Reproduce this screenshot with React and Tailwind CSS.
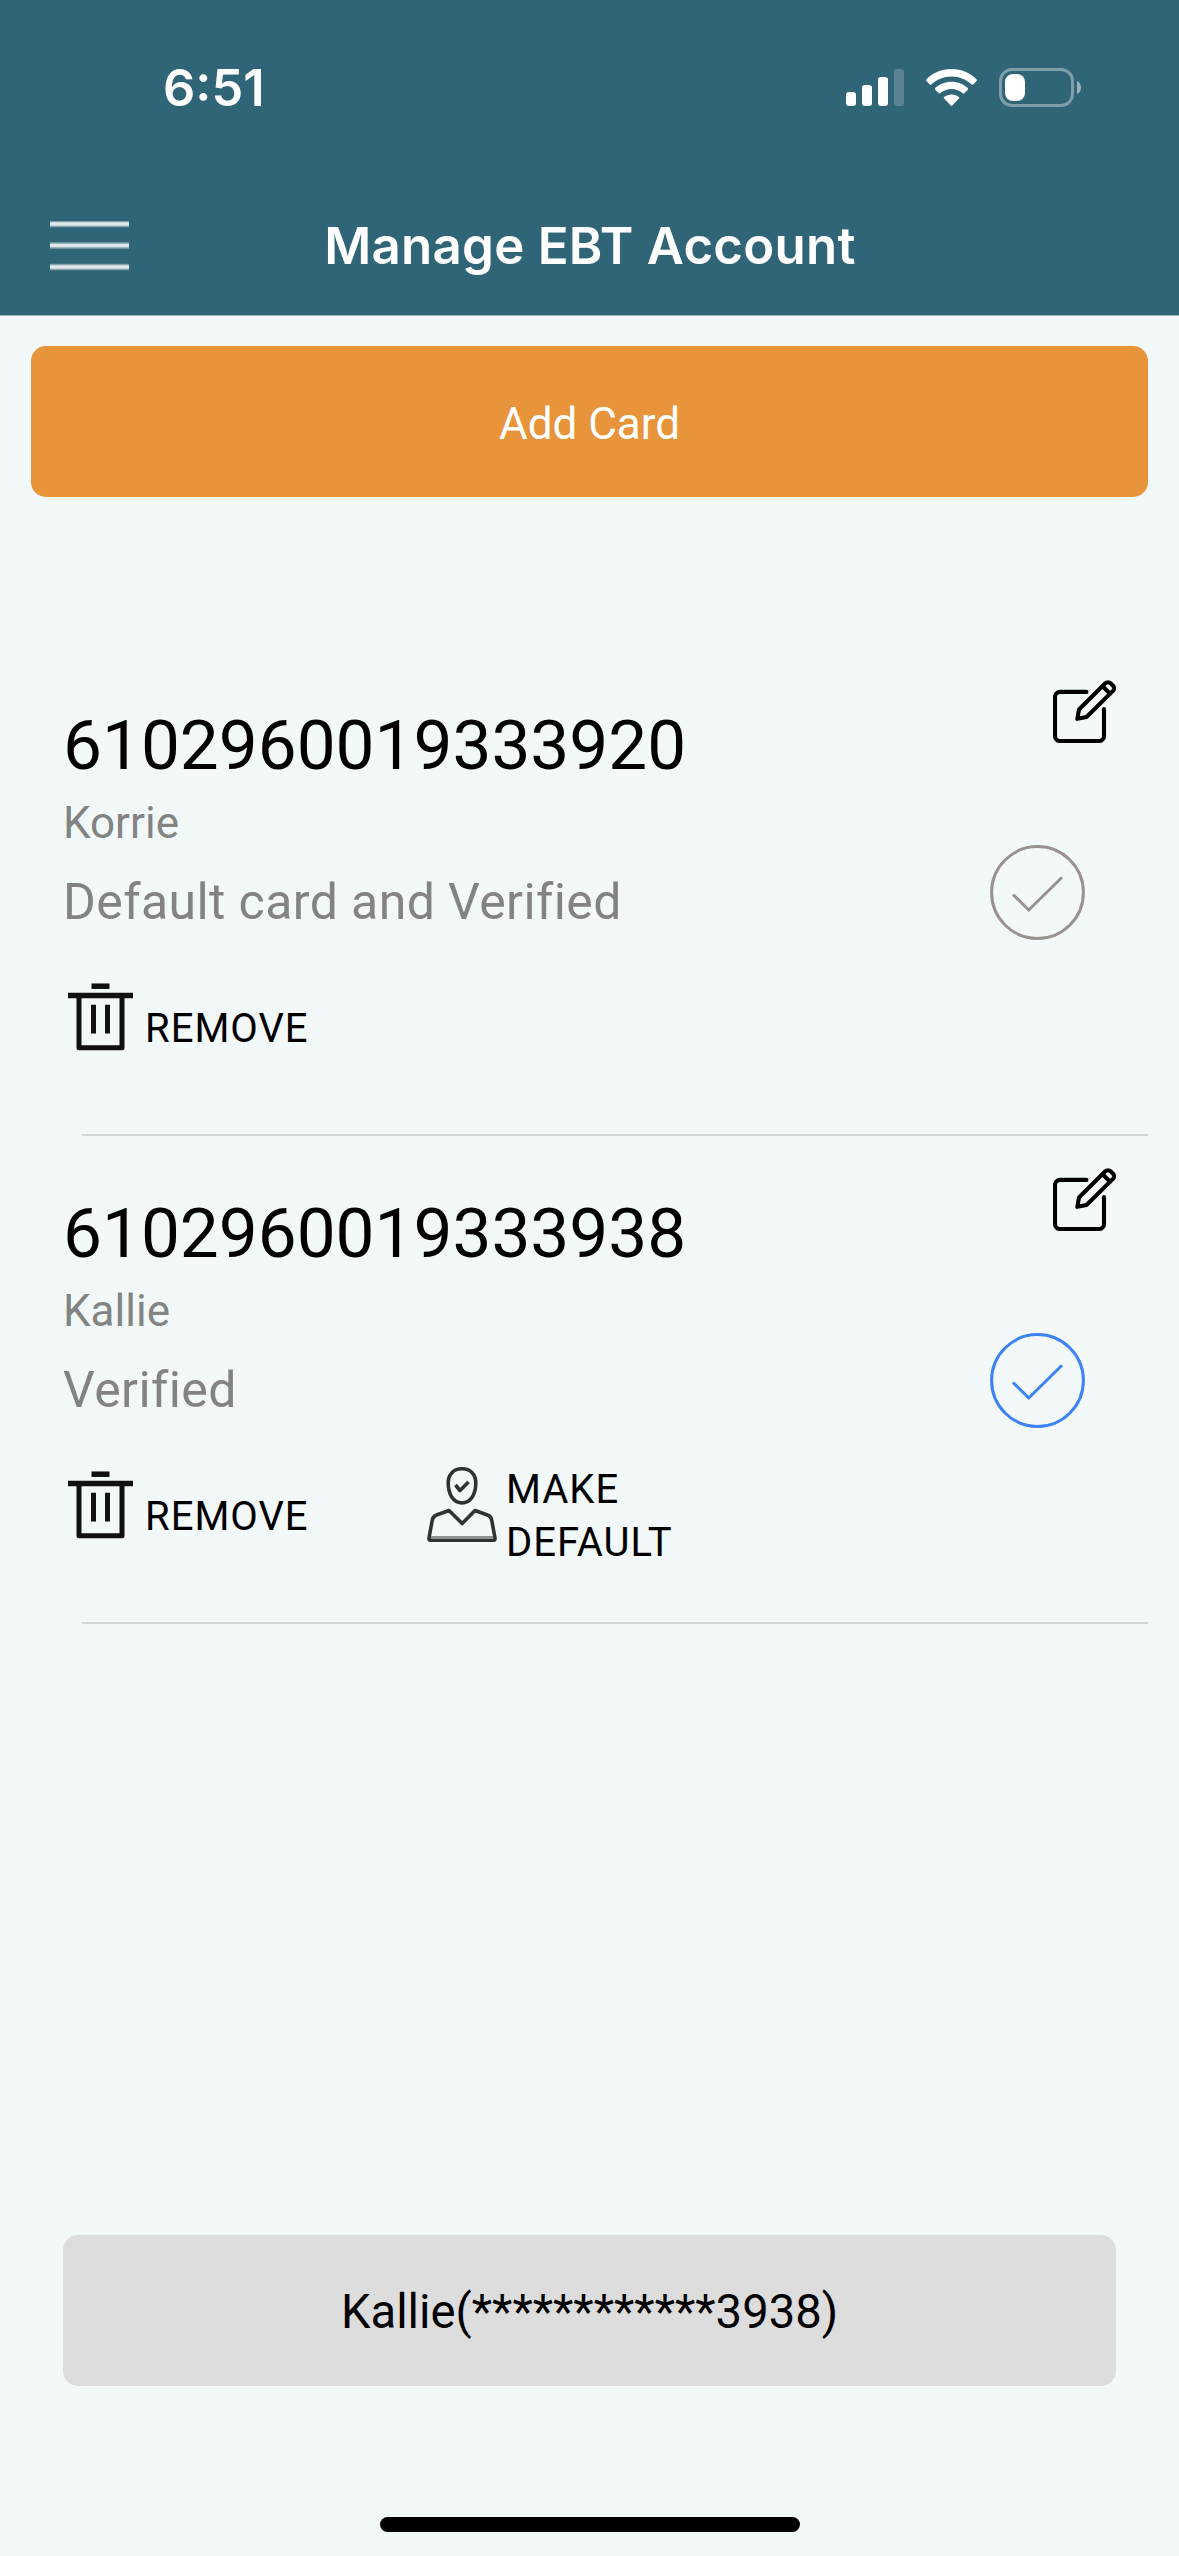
import React from 'react';

const cards = [
  {
    id: 1,
    number: '6102960019333920',
    name: 'Korrie',
    status: 'Default card and Verified',
    isDefault: true,
  },
  {
    id: 2,
    number: '6102960019333938',
    name: 'Kallie',
    status: 'Verified',
    isDefault: false,
  },
];

const TrashIcon = () => (
  <svg className="w-[68px] h-[70px] shrink-0" viewBox="0 0 68 70" fill="none" stroke="#111">
    <path d="M24.500 5.200h18" strokeWidth="5.500" />
    <path d="M1 14.500h65" strokeWidth="5.500" />
    <path d="M12 14v52.800h43V14" strokeWidth="5" strokeLinejoin="round" />
    <path d="M26.500 23.800V52.500M40.500 23.800V52.500" strokeWidth="5" />
  </svg>
);

const PersonIcon = () => (
  <svg className="w-[70px] h-[75px] mt-[4px] shrink-0" viewBox="0 0 70 75" fill="none" stroke="#2f3335" strokeWidth="3.600" strokeLinejoin="round">
    <path d="M35 1.800c-8.500 0-13.800 5.500-13.800 14.200 0 11.500 5.300 20 13.800 20s13.800-8.500 13.800-20C48.800 7.300 43.500 1.800 35 1.800z" />
    <path d="M28.500 18l4.500 5.500 8.500-8.500" />
    <path d="M2 71l3.300-18c.7-3 1.500-4 4.200-5l12.500-4.500L35.200 56.500 48 43.500l12.500 4.500c2.700 1 3.500 2 4.200 5L68 71c.3 1.500-.3 2.200-1.500 2.200h-63C2.300 73.200 1.700 72.500 2 71z" />
    <path d="M4 70.300h62" stroke="#8b9092" strokeWidth="2.500" />
  </svg>
);

const EditIcon = () => (
  <svg className="w-[63px] h-[63px]" viewBox="0 0 63 63" fill="none" stroke="black" strokeWidth="4.100" strokeLinecap="round" strokeLinejoin="round">
    <path d="M33.500 11.900H7a5 5 0 0 0-5 5V56a5 5 0 0 0 5 5h39a5 5 0 0 0 5-5V29" />
    <path d="M24.300 38.800l1.700-9.300L52.300 3.200a4 4 0 0 1 5.300 0l2.400 2.400a4 4 0 0 1 0 5.300L33.500 37z" />
    <path d="M49.800 6.500l6.800 6.800" />
  </svg>
);

const CheckCircle = ({ className }) => (
  <svg className={className} viewBox="0 0 95 95" fill="none" stroke="currentColor" strokeWidth="3">
    <circle cx="47.500" cy="47.500" r="45.900" />
    <path d="M23 49.500l15.800 15.500L72 32.300" />
  </svg>
);

const StatusBar = () => (
  <div className="flex items-start justify-between pl-[163px] pr-[98px] pt-[68px] h-[176px]">
    <span className="font-['Inter'] font-semibold text-[50.5px] leading-[40px]">6:51</span>
    <div className="flex items-start">
      <svg className="w-[58px] h-[39px]" viewBox="0 0 58 39" fill="white">
        <rect x="0" y="24" width="10" height="14" rx="3" />
        <rect x="16" y="17" width="10" height="21" rx="3" />
        <rect x="32" y="9" width="10" height="29" rx="3" />
        <rect x="48" y="1" width="10" height="37" rx="3" opacity=".2" />
      </svg>
      <svg className="w-[51px] h-[39px] ml-[22px]" viewBox="0 0 51 39" fill="white">
        <path d="M25.500 1C15.500 1 6.800 5 .3 11.400c-.4.400-.4 1 0 1.400l3.600 3.700c.4.400 1 .4 1.400 0C10.500 11.500 17.700 8.500 25.500 8.500s15 3 20.200 8c.4.400 1 .4 1.400 0l3.600-3.700c.4-.4.4-1 0-1.400C44.200 5 35.500 1 25.500 1z" />
        <path d="M25.500 13.700c-6.300 0-12.100 2.400-16.400 6.400-.4.400-.4 1 0 1.400l3.700 3.800c.4.400 1 .4 1.400 0 3-2.700 7-4.300 11.300-4.300s8.300 1.600 11.300 4.300c.4.400 1 .4 1.400 0l3.700-3.800c.4-.4.4-1 0-1.400-4.300-4-10.100-6.400-16.400-6.400z" />
        <path d="M25.500 26.500c-2.800 0-5.400 1-7.400 2.600-.5.400-.5 1 0 1.400l6.700 7c.4.400 1 .4 1.400 0l6.700-7c.5-.4.5-1 0-1.400-2-1.600-4.600-2.600-7.400-2.600z" />
      </svg>
      <svg className="w-[82px] h-[39px] ml-[22px]" viewBox="0 0 82 39" fill="none">
        <rect x="1.500" y="1.500" width="72" height="36" rx="11.500" stroke="white" strokeOpacity=".38" strokeWidth="3" />
        <rect x="6" y="6" width="20" height="27" rx="8" fill="white" />
        <path d="M78 13c2.600 1 4 3.600 4 6.500s-1.400 5.500-4 6.500z" fill="white" fillOpacity=".5" />
      </svg>
    </div>
  </div>
);

const Header = () => (
  <header className="bg-[#306577] text-white h-[316px] border-b border-[#a3b6c4]">
    <StatusBar />
    <div className="grid grid-cols-[129px_1fr_129px] items-center h-[139px]">
      <button type="button" aria-label="Menu" className="ml-[50px]">
        <svg className="w-[79px] h-[50px]" viewBox="0 0 79 50" stroke="white">
          <path d="M0 3h79M0 24.500h79M0 46h79" strokeWidth="6.500" strokeOpacity=".4" />
          <path d="M0 3h79M0 24.500h79M0 46h79" strokeWidth="3.500" strokeOpacity=".75" />
        </svg>
      </button>
      <h1 className="text-center font-['Inter'] font-semibold text-[51px] tracking-[0.25px] whitespace-nowrap pt-[2px] pl-[1px]">Manage EBT Account</h1>
    </div>
  </header>
);

const CardRow = ({ card }) => (
  <li className="flex h-[488px] justify-between">
    <div className="flex flex-col pl-[63px]">
      <div className="text-[69.3px] leading-[80px] text-black mt-[58px]">{card.number}</div>
      <div className="text-[44px] leading-[52px] text-[#838383] mt-[11px]">{card.name}</div>
      <div className="text-[50px] leading-[60px] tracking-[0.4px] text-[#838383] mt-[23px]">{card.status}</div>
      <div className="flex mt-[49px]">
        <button type="button" className="flex items-start w-[364px] pl-[4px]">
          <TrashIcon />
          <span className="text-[40px] leading-[53px] tracking-[1px] ml-[10px] mt-[21px]">REMOVE</span>
        </button>
        {!card.isDefault && (
          <button type="button" className="flex items-start text-left -mt-[6px]">
            <PersonIcon />
            <span className="text-[40px] leading-[53px] tracking-[1px] ml-[9px] w-[180px]">MAKE DEFAULT</span>
          </button>
        )}
      </div>
    </div>
    <div className="flex flex-col items-end pt-[32px] pr-[63px]">
      <button type="button" aria-label="Edit card">
        <EditIcon />
      </button>
      <CheckCircle className={`w-[95px] h-[95px] mt-[102px] mr-[31px] ${card.isDefault ? 'text-[#9a9191]' : 'text-[#3d82f7]'}`} />
    </div>
  </li>
);

const App = () => {
  return (
    <div className="flex flex-col w-[1179px] h-[2556px] bg-[#f3f9f9] font-['Roboto'] text-black overflow-hidden">
      <Header />
      <button type="button" className="mt-[30px] mx-[31px] h-[151px] pt-[4px] shrink-0 rounded-[15px] bg-[#e8943b] text-white text-[44px]">
        Add Card
      </button>
      <ul className="mt-[151px]">
        {cards.map(card => (
          <React.Fragment key={card.id}>
            <CardRow card={card} />
            <div className="h-[2px] -mt-[2px] ml-[82px] mr-[31px] bg-[#d0d5d6]" />
          </React.Fragment>
        ))}
      </ul>
      <div className="mt-auto mx-[63px] h-[151px] pt-[4px] rounded-[15px] bg-[#ddd] flex items-center justify-center text-[47.2px]">
        Kallie(************3938)
      </div>
      <div className="mt-[131px] mb-[24px] mx-auto w-[420px] h-[15px] rounded-full bg-black" />
    </div>
  );
};

export default App;
